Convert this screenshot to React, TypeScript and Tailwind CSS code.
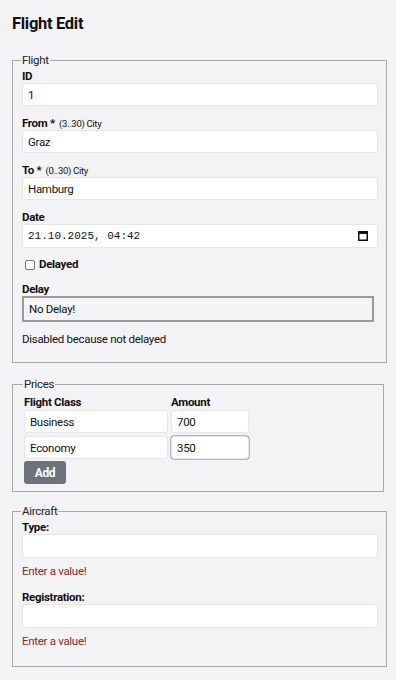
import React from 'react'

const inputCls =
  'block h-[23px] rounded-[3px] border border-[#e6e6e8] bg-white px-[5px] text-[11.5px] text-[#111] outline-none'

function Field({ label, hint, value, className = '' }: { label: string; hint?: string; value: string; className?: string }) {
  return (
    <div className="mb-[10px]">
      <div className="h-[14px] text-[11.5px] leading-[14px] font-bold text-[#111]">
        {label}
        {hint && <span className="ml-[4px] text-[9.5px] font-normal">{hint}</span>}
      </div>
      <input readOnly value={value} className={`${inputCls} w-[356px] ${className}`} />
    </div>
  )
}

function ErrorField({ label }: { label: string }) {
  return (
    <div className="mb-[12px]">
      <div className="h-[14px] text-[11.5px] leading-[14px] font-bold text-[#111]">{label}</div>
      <input readOnly value="" className={`${inputCls} h-[24px] w-[356px]`} />
      <div className="mt-[6px] text-[11.5px] leading-[14px] text-[#8b2a2a]">Enter a value!</div>
    </div>
  )
}

function Box({ title, children, className = '' }: { title: string; children: React.ReactNode; className?: string }) {
  return (
    <fieldset className={`border border-[#a8a8ab] pl-[9px] pr-[8px] ${className}`}>
      <legend className="ml-[-1px] px-[1px] text-[11.5px] leading-[14px] text-[#222]">{title}</legend>
      {children}
    </fieldset>
  )
}

export default function App() {
  return (
    <div className="min-h-[680px] bg-[#f3f3f6] px-3 pt-[14px] pb-4 font-['Roboto',sans-serif] tracking-[-0.3px] text-[#111]">
      <h1 className="mb-[19px] text-[16.5px] leading-[20px] font-bold">Flight Edit</h1>

      <Box title="Flight" className="pb-[16px]">
        <div className="pt-[2px]">
          <Field label="ID" value="1" />
          <Field label="From *" hint="(3..30) City" value="Graz" />
          <Field label="To *" hint="(0..30) City" value="Hamburg" />
          <div className="mb-[9px]">
            <div className="h-[14px] text-[11.5px] leading-[14px] font-bold">Date</div>
            <div className="relative w-[356px]">
              <input
                readOnly
                value="21.10.2025, 04:42"
                className={`${inputCls} h-[24px] w-[356px] font-['Liberation_Mono',monospace] text-[11px] tracking-normal`}
              />
              <svg
                className="absolute top-[7px] right-[10px]"
                width="10"
                height="10"
                viewBox="0 0 10 10"
                fill="none"
              >
                <rect x="0.75" y="0.75" width="8.5" height="8.5" stroke="#111" strokeWidth="1.5" />
                <rect x="0.75" y="0.75" width="8.5" height="2.2" fill="#111" />
              </svg>
            </div>
          </div>
          <label className="flex h-[16px] items-center gap-[4px] pl-[3px] text-[11.5px] font-bold">
            <span className="inline-block h-[10px] w-[10px] rounded-[2px] border border-[#777] bg-white" />
            Delayed
          </label>
          <div className="mt-[9px] h-[14px] text-[11.5px] leading-[14px] font-bold">Delay</div>
          <input
            readOnly
            value="No Delay!"
            className="block h-[26px] w-[352px] border-[2px] border-[#9a9a9c] bg-[#f4f4f6] px-[5px] text-[11.5px] text-[#111] outline-none"
          />
          <div className="mt-[10px] text-[11.5px] leading-[14px]">Disabled because not delayed</div>
        </div>
      </Box>

      <Box title="Prices" className="mt-[14px] pb-[7px] pl-[11px]">
        <div className="flex pt-[4px] text-[11.5px] leading-[14px] font-bold">
          <div className="w-[147px]">Flight Class</div>
          <div>Amount</div>
        </div>
        <div className="mt-[1px] flex flex-col gap-[3px]">
          <div className="flex gap-[3px]">
            <input readOnly value="Business" className={`${inputCls} w-[144px]`} />
            <input readOnly value="700" className={`${inputCls} w-[78px]`} />
          </div>
          <div className="flex gap-[3px]">
            <input readOnly value="Economy" className={`${inputCls} w-[144px]`} />
            <input
              readOnly
              value="350"
              className={`${inputCls} w-[78px] border-[#5b7fc4] shadow-[0_0_0_0.5px_#5b7fc4]`}
            />
          </div>
        </div>
        <button className="mt-[2px] h-[23px] w-[42px] rounded-[3px] bg-[#6c737c] text-[12px] font-bold text-white">
          Add
        </button>
      </Box>

      <Box title="Aircraft" className="mt-[12px] pb-[6px]">
        <div className="pt-[2px]">
          <ErrorField label="Type:" />
          <ErrorField label="Registration:" />
        </div>
      </Box>
    </div>
  )
}
